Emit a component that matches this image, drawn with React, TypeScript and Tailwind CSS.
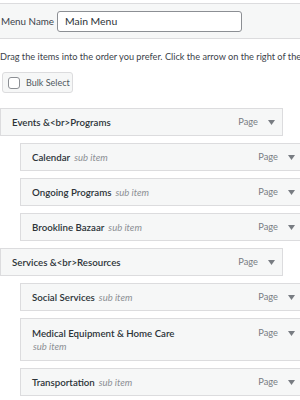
type Item = { title: string; depth: number; wrap?: boolean };

const items: Item[] = [
  { title: "Events &<br>Programs", depth: 0 },
  { title: "Calendar", depth: 1 },
  { title: "Ongoing Programs", depth: 1 },
  { title: "Brookline Bazaar", depth: 1 },
  { title: "Services &<br>Resources", depth: 0 },
  { title: "Social Services", depth: 1 },
  { title: "Medical Equipment & Home Care", depth: 1, wrap: true },
  { title: "Transportation", depth: 1 },
];

function Arrow() {
  return (
    <svg width="7" height="5" viewBox="0 0 7 5" className="fill-[#787c82]">
      <path d="M0 0h7L3.5 5z" />
    </svg>
  );
}

function MenuItem({ item }: { item: Item }) {
  const sub = item.depth > 0;
  return (
    <div
      className={`w-[283px] shrink-0 border border-[#dcdcde] bg-[#f6f7f7] flex justify-between pl-[11px] pr-[7px] ${
        sub ? "ml-5" : ""
      } ${item.wrap ? "items-start pt-[7px] h-[43px]" : "items-center h-[28px]"}`}
    >
      <div className="text-[9.7px] leading-[14px] text-[#2c3338] whitespace-nowrap">
        <span className="font-semibold">{item.title}</span>
        {sub &&
          (item.wrap ? (
            <div className="italic text-[9.5px] text-[#8c8f94] pl-[1px]">sub item</div>
          ) : (
            <span className="italic text-[9.5px] text-[#8c8f94] ml-[4px]">sub item</span>
          ))}
      </div>
      <div className="flex items-center gap-[10px] text-[9.3px] leading-[14px] text-[#787c82]">
        <span>Page</span>
        <Arrow />
      </div>
    </div>
  );
}

export default function App() {
  return (
    <div className="w-[300px] h-[400px] overflow-hidden bg-white font-['Lato',sans-serif] text-[#3c434a]">
      <div className="mt-[3px] h-[36px] border-y border-[#dcdcde] bg-[#f6f7f7] flex items-center pl-[1px] pt-[1px]">
        <span className="text-[9.8px] w-[56px] whitespace-nowrap">Menu Name</span>
        <div className="w-[185px] h-[21px] border border-[#8c8f94] rounded-[3px] bg-white flex items-center px-[7px] text-[10.4px] text-[#2c3338]">
          Main Menu
        </div>
      </div>

      <p className="mt-[11px] text-[9.2px] leading-[14px] whitespace-nowrap overflow-hidden">
        Drag the items into the order you prefer. Click the arrow on the right of the item to reveal additional configuration options.
      </p>

      <div className="mt-[8px] ml-[2px] w-[71px] h-[21px] border border-[#dcdcde] rounded-[3px] bg-[#f6f7f7] flex items-center pl-[5px] gap-[6px]">
        <span className="w-[12px] h-[12px] shrink-0 rounded-[3px] border border-[#8c8f94] bg-white" />
        <span className="text-[9px] text-[#50575e] whitespace-nowrap">Bulk Select</span>
      </div>

      <div className="mt-[15px] flex flex-col gap-[7px]">
        {items.map((item) => (
          <MenuItem key={item.title} item={item} />
        ))}
      </div>
    </div>
  );
}
